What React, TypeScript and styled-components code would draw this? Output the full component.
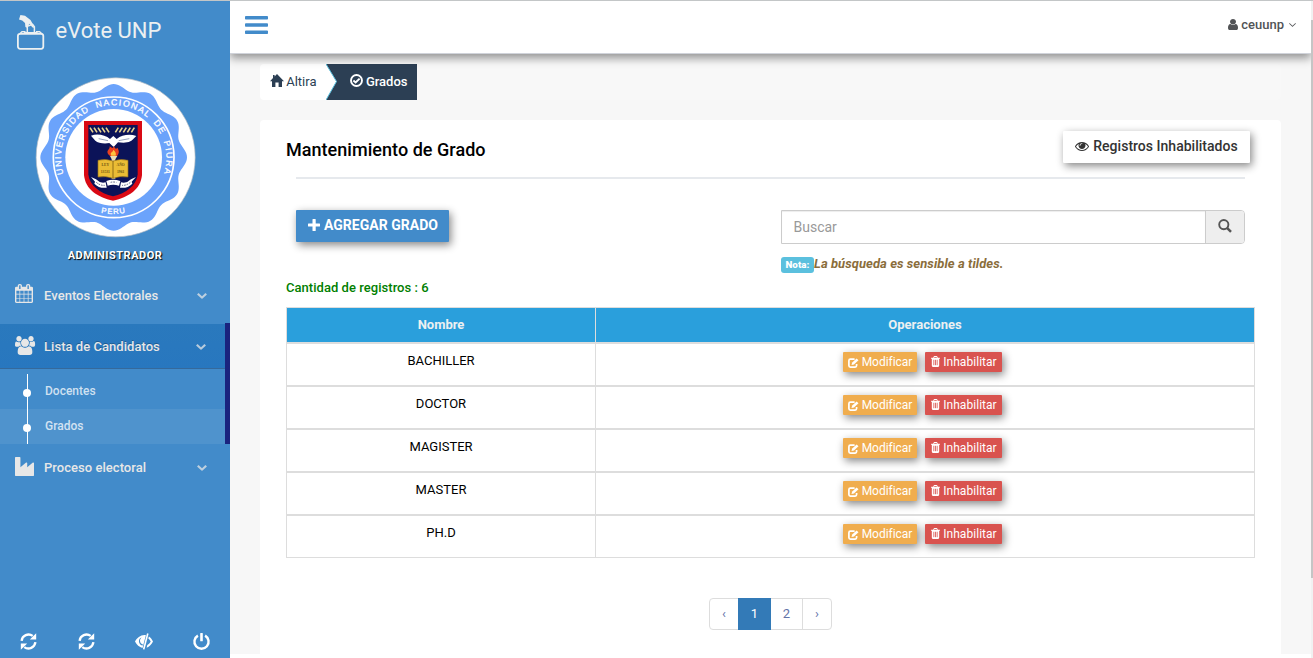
import React from "react";
import styled, { createGlobalStyle, css } from "styled-components";

const GlobalStyle = createGlobalStyle`
  *, *::before, *::after { box-sizing: border-box; }
  html, body { margin: 0; height: 100%; overflow: hidden; }
  body {
    font-family: Roboto, "Liberation Sans", sans-serif;
    font-size: 13px;
    line-height: 18px;
    color: #73879c;
    background: #f7f7f7;
  }
`;

/* ---------- icons ---------- */

type Glyph = { box: string; d: string };

const glyphs = {
  bars: {
    box: "128 192 1536 1408",
    d: "M1664 1344v128q0 26-19 45t-45 19h-1408q-26 0-45-19t-19-45v-128q0-26 19-45t45-19h1408q26 0 45 19t19 45zm0-512v128q0 26-19 45t-45 19h-1408q-26 0-45-19t-19-45v-128q0-26 19-45t45-19h1408q26 0 45 19t19 45zm0-512v128q0 26-19 45t-45 19h-1408q-26 0-45-19t-19-45v-128q0-26 19-45t45-19h1408q26 0 45 19t19 45z",
  },
  trash: {
    box: "192 128 1408 1536",
    d: "M704 1376v-704q0-14-9-23t-23-9h-64q-14 0-23 9t-9 23v704q0 14 9 23t23 9h64q14 0 23-9t9-23zm256 0v-704q0-14-9-23t-23-9h-64q-14 0-23 9t-9 23v704q0 14 9 23t23 9h64q14 0 23-9t9-23zm256 0v-704q0-14-9-23t-23-9h-64q-14 0-23 9t-9 23v704q0 14 9 23t23 9h64q14 0 23-9t9-23zm-544-992h448l-48-117q-7-9-17-11h-317q-10 2-17 11zm928 32v64q0 14-9 23t-23 9h-96v948q0 83-47 143.5t-113 60.5h-832q-66 0-113-58.5t-47-141.5v-952h-96q-14 0-23-9t-9-23v-64q0-14 9-23t23-9h309l70-167q15-37 54-63t79-26h320q40 0 79 26t54 63l70 167h309q14 0 23 9t9 23z",
  },
  eye: {
    box: "0 384 1792 1152",
    d: "M1664 960q-152-236-381-353 61 104 61 225 0 185-131.5 316.5t-316.5 131.5-316.5-131.5-131.5-316.5q0-121 61-225-229 117-381 353 133 205 333.5 326.5t434.5 121.5 434.5-121.5 333.5-326.5zm-720-384q0-20-14-34t-34-14q-125 0-214.5 89.5t-89.5 214.5q0 20 14 34t34 14 34-14 14-34q0-86 61-147t147-61q20 0 34-14t14-34zm848 384q0 34-20 69-140 230-376.5 368.5t-499.5 138.5-499.5-139-376.5-368q-20-35-20-69t20-69q140-229 376.5-368t499.5-139 499.5 139 376.5 368q20 35 20 69z",
  },
  calendar: {
    box: "64 0 1664 1792",
    d: "M192 1664h288v-288h-288v288zm352 0h320v-288h-320v288zm-352-352h288v-320h-288v320zm352 0h320v-320h-320v320zm-352-384h288v-288h-288v288zm736 736h320v-288h-320v288zm-384-736h320v-288h-320v288zm768 736h288v-288h-288v288zm-384-352h320v-320h-320v320zm-352-864v-288q0-13-9.5-22.5t-22.5-9.5h-64q-13 0-22.5 9.5t-9.5 22.5v288q0 13 9.5 22.5t22.5 9.5h64q13 0 22.5-9.5t9.5-22.5zm736 864h288v-320h-288v320zm-384-384h320v-288h-320v288zm384 0h288v-288h-288v288zm32-480v-288q0-13-9.5-22.5t-22.5-9.5h-64q-13 0-22.5 9.5t-9.5 22.5v288q0 13 9.5 22.5t22.5 9.5h64q13 0 22.5-9.5t9.5-22.5zm384-64v1280q0 52-38 90t-90 38h-1408q-52 0-90-38t-38-90v-1280q0-52 38-90t90-38h128v-96q0-66 47-113t113-47h64q66 0 113 47t47 113v96h384v-96q0-66 47-113t113-47h64q66 0 113 47t47 113v96h128q52 0 90 38t38 90z",
  },
  users: {
    box: "64 0 1920 1792",
    d: "M657 896q-162 5-265 128h-134q-82 0-138-40.5t-56-118.5q0-353 124-353 6 0 43.5 21t97.5 42.5 119 21.5q67 0 133-23-5 37-5 66 0 159 93 293zm1071 637q0 120-73 189.5t-194 69.5h-874q-121 0-194-69.5t-73-189.5q0-53 3.5-103.5t14-109 26.5-108.5 43-97.5 62-81 85.5-53.5 111.5-20q10 0 43 21.5t73 48 107 48 135 21.5 135-21.5 107-48 73-48 43-21.5q61 0 111.5 20t85.5 53.5 62 81 43 97.5 26.5 108.5 14 109 3.5 103.5zm-1024-1277q0 106-75 181t-181 75-181-75-75-181 75-181 181-75 181 75 75 181zm704 384q0 159-112.5 271.5t-271.5 112.5-271.5-112.5-112.5-271.5 112.5-271.5 271.5-112.5 271.5 112.5 112.5 271.5zm576 225q0 78-56 118.5t-138 40.5h-134q-103-123-265-128 93-134 93-293 0-29-5-66 66 23 133 23 59 0 119-21.5t97.5-42.5 43.5-21q124 0 124 353zm-128-609q0 106-75 181t-181 75-181-75-75-181 75-181 181-75 181 75 75 181z",
  },
  industry: {
    box: "0 0 1792 1792",
    d: "M448 0q26 0 45 19t19 45v891l536-429q17-14 40-14 26 0 45 19t19 45v379l536-429q17-14 40-14 26 0 45 19t19 45v1152q0 26-19 45t-45 19h-1664q-26 0-45-19t-19-45v-1664q0-26 19-45t45-19h384z",
  },
  user: {
    box: "256 128 1280 1536",
    d: "M1536 1399q0 109-62.5 187t-150.5 78h-854q-88 0-150.5-78t-62.5-187q0-85 8.5-160.5t31.5-152 58.5-131 94-89 134.5-34.5q131 128 313 128t313-128q76 0 134.5 34.5t94 89 58.5 131 31.5 152 8.5 160.5zm-256-887q0 159-112.5 271.5t-271.5 112.5-271.5-112.5-112.5-271.5 112.5-271.5 271.5-112.5 271.5 112.5 112.5 271.5z",
  },
  angleDown: {
    box: "384 640 1024 608",
    d: "M1395 736q0 13-10 23l-466 466q-10 10-23 10t-23-10l-466-466q-10-10-10-23t10-23l50-50q10-10 23-10t23 10l393 393 393-393q10-10 23-10t23 10l50 50q10 10 10 23z",
  },
  chevronDown: {
    box: "64 512 1664 1088",
    d: "M1683 808l-742 741q-19 19-45 19t-45-19l-742-741q-19-19-19-45.5t19-45.5l166-165q19-19 45-19t45 19l531 531 531-531q19-19 45-19t45 19l166 165q19 19 19 45.5t-19 45.5z",
  },
  home: {
    box: "0 0 14 13",
    d: "M7 0L14 7.2H12V13H8.6V8.4H5.4V13H2V7.2H0L3 4.1V1H4.6V2.5Z",
  },
  plus: {
    box: "0 0 12 12",
    d: "M4.5 0.5Q4.5 0 5 0H7.2Q7.7 0 7.7 0.5V4.4H11.5Q12 4.4 12 4.9V7Q12 7.5 11.5 7.5H7.7V11.5Q7.7 12 7.2 12H5Q4.5 12 4.5 11.5V7.5H0.5Q0 7.5 0 7V4.9Q0 4.4 0.5 4.4H4.5Z",
  },
} satisfies Record<string, Glyph>;

type IconProps = { name: keyof typeof glyphs; w: number; h: number };

const Svg = styled.svg`
  display: block;
  flex: none;
  fill: currentColor;
  overflow: visible;
`;

const Icon = ({ name, w, h }: IconProps) => (
  <Svg width={w} height={h} viewBox={glyphs[name].box} preserveAspectRatio="none">
    <path d={glyphs[name].d} />
  </Svg>
);

const EditIcon = () => (
  <Svg width="11" height="10" viewBox="0 0 11 10">
    <path
      d="M6.6 1.2H2.4Q0.9 1.2 0.9 2.7V7.6Q0.9 9.1 2.4 9.1H7.1Q8.6 9.1 8.6 7.6V6"
      fill="none"
      stroke="currentColor"
      strokeWidth="1.7"
    />
    <path d="M3.5 7L4.2 4.6L8.6 0.4L10.5 2.2L6 6.4Z" />
  </Svg>
);

const RefreshIcon = () => (
  <Svg width="17" height="17" viewBox="0 0 17 17">
    <path d="M1.6 7.8A7 7 0 0 1 12.7 2.9" fill="none" stroke="currentColor" strokeWidth="2.3" />
    <path d="M15.4 9.2A7 7 0 0 1 4.3 14.1" fill="none" stroke="currentColor" strokeWidth="2.3" />
    <path d="M16.2 0.2V6.6H9.8Z" />
    <path d="M0.8 16.8V10.4H7.2Z" />
  </Svg>
);

const EyeCloseIcon = () => (
  <Svg width="18" height="17" viewBox="0 0 18 17">
    <path
      fillRule="evenodd"
      d="M10.9 2.2L7.5 15.1C4.4 14.3 1.6 11.8 0 8.6C2 4.6 6.4 1.3 10.9 2.2ZM6.6 4.6C4.7 5.1 3.7 6.9 4 9C4.4 11 5.8 12.3 7.7 12.5L8 11.4C6.4 11.3 5.1 10 5 8.1C4.9 6.6 5.6 5.4 6.6 4.6Z"
    />
    <path d="M12 0.3L13.6 0.7L9.5 16.6L7.9 16.2Z" />
    <path d="M13.9 3.6C15.8 4.8 17.2 6.8 18 8.6C16.6 11.4 14.5 13.7 11.6 14.8L12.3 12C13.9 11.2 15 10 15.7 8.5C15.1 7.2 14.2 6.2 13.3 5.6Z" />
  </Svg>
);

const PowerIcon = () => (
  <Svg width="17" height="17" viewBox="0 0 17 17">
    <path d="M4.9 2.6A7.1 7.1 0 1 0 12.1 2.6" fill="none" stroke="currentColor" strokeWidth="2.4" />
    <rect x="7.2" y="0" width="2.6" height="8.3" rx="0.6" />
  </Svg>
);

const OkCircleIcon = () => (
  <Svg width="13" height="13" viewBox="0 0 13 13">
    <circle cx="6.5" cy="6.5" r="5.5" fill="none" stroke="currentColor" strokeWidth="1.9" />
    <path d="M3.4 6.6L5.6 8.4L9.6 4.6" fill="none" stroke="currentColor" strokeWidth="2" />
  </Svg>
);

const SearchIcon = () => (
  <Svg width="14" height="14" viewBox="0 0 14 14">
    <circle cx="5.8" cy="5.6" r="4.6" fill="none" stroke="currentColor" strokeWidth="1.9" />
    <path d="M9 8.8L13 12.8" stroke="currentColor" strokeWidth="2.5" />
  </Svg>
);

const BallotIcon = () => (
  <Svg width="28" height="36" viewBox="0 0 28 36">
    <path d="M3.4 0L8 0.8L13.5 5L16.5 10.2L17 13L15.2 12.2L12.6 8.8L11.2 10.6L10.6 13L8.4 12L8 8L5.2 5.6L2 4.6Z" />
    <path d="M10.3 18V11.2L15.6 9.4L17.4 11.8V18" fill="none" stroke="currentColor" strokeWidth="1.5" />
    <path d="M8.5 16.8H5L2.2 19.3M19 16.8H22.6L25.4 19.3M7 17.6H20.6" fill="none" stroke="currentColor" strokeWidth="1.4" />
    <rect x="0.9" y="18.9" width="25.4" height="14.9" rx="2.2" fill="none" stroke="currentColor" strokeWidth="1.8" />
  </Svg>
);

/* ---------- university seal ---------- */

const CX = 281;
const CY = 262;
const scallop =
  Array.from({ length: 240 }, (_, i) => {
    const a = (i / 240) * Math.PI * 2;
    const r = 211 + 9 * Math.cos(12 * a);
    return `${i ? "L" : "M"}${(CX + r * Math.sin(a)).toFixed(1)} ${(CY - r * Math.cos(a)).toFixed(1)}`;
  }).join("") + "Z";

const SealSvg = styled.svg`
  display: block;
  margin: 0 0 0 35px;
`;

const SealText = styled.text<{ $size: number }>`
  font-family: "Liberation Sans", sans-serif;
  font-size: ${(p) => p.$size}px;
  fill: #fff;
  stroke: #fff;
  stroke-width: 0.9;
`;

const BookText = styled.text`
  font-family: "Liberation Serif", serif;
  font-size: 11px;
  font-weight: 700;
  fill: #6b5310;
  text-anchor: middle;
`;

const Seal = () => (
  <SealSvg width="161" height="161" viewBox="45 21 483 483">
    <defs>
      <path id="arcTop" d="M130.6 312A158 158 0 1 1 431.4 312" />
      <path id="arcBottom" d="M130 340A170 170 0 0 0 432 340" />
    </defs>
    <circle cx="287" cy="262" r="238.5" fill="#fff" stroke="#b9bfc6" strokeWidth="2" />
    <path d={scallop} fill="#6ba3fb" />
    <circle cx={CX} cy={CY} r="181" fill="none" stroke="#fff" strokeWidth="5" />
    <circle cx={CX} cy={CY} r="145" fill="#fff" />
    <SealText $size={26} wordSpacing="9">
      <textPath href="#arcTop" textLength="592">
        UNIVERSIDAD NACIONAL DE PIURA
      </textPath>
    </SealText>
    <SealText $size={23} letterSpacing="3">
      <textPath href="#arcBottom" startOffset="50%" textAnchor="middle">
        PERU
      </textPath>
    </SealText>
    <path d="M192 153H366V315C362 358 326 382 279 392C232 382 196 358 192 315Z" fill="#d90914" />
    <path d="M205 165H353V313C350 347 318 370 279 379C240 370 208 347 205 313Z" fill="#0b1358" />
    <path
      d="M210 173l9 14M222 173l9 14M234 173l9 14M246 173l9 14M258 173l9 14M286 187l9-14M298 187l9-14M310 187l9-14M322 187l9-14M334 187l9-14"
      stroke="#e9d48e"
      strokeWidth="5"
    />
    <path
      d="M213 197C232 190 256 195 270 207L280 198L290 207C306 195 328 191 349 198C341 206 337 211 331 214C320 220 304 218 294 217L281 231L268 219C252 222 234 219 226 212Z"
      fill="#fff"
    />
    <path d="M236 206L264 212M328 206L296 212" stroke="#98a3bd" strokeWidth="3" />
    <path d="M264 252C258 240 270 240 269 229C277 234 279 238 281 228C286 235 287 240 292 233C299 243 297 251 291 258H270Z" fill="#e8401f" />
    <path d="M272 253C272 245 279 247 280 239C287 246 289 249 287 257H274Z" fill="#ffc23d" />
    <path d="M270 258H292L286 268V326H275V268Z" fill="#eadfb6" />
    <path d="M234 271Q258 265 279 273Q301 265 324 271V321Q300 317 279 325Q257 317 234 321Z" fill="#eabc35" stroke="#987318" strokeWidth="2" />
    <path d="M279 273V324" stroke="#7c5d11" strokeWidth="2.5" />
    <BookText x="256" y="289">LEY</BookText>
    <BookText x="302" y="289">AÑO</BookText>
    <BookText x="256" y="310">13531</BookText>
    <BookText x="302" y="310">1961</BookText>
    <path d="M213 321L228 328Q242 342 257 337L260 353Q238 356 223 341L225 335ZM348 321L333 328Q319 342 303 337L300 353Q322 356 337 341L335 335ZM259 333Q279 326 301 333L297 347Q279 341 263 347Z" fill="#fff" />
    <path d="M229 337Q240 347 254 346M331 337Q320 347 306 346M272 337Q280 335 289 337" fill="none" stroke="#59617f" strokeWidth="3" strokeDasharray="5 3" />
  </SealSvg>
);

/* ---------- shell ---------- */

const Page = styled.div`
  height: 658px;
  display: flex;
  flex-direction: column;
  border-top: 1px solid #c3c6c7;
  background: #f7f7f7;
`;

const Body = styled.div`
  flex: 1;
  min-height: 0;
  display: flex;
`;

const Sidebar = styled.aside`
  width: 230px;
  flex: none;
  display: flex;
  flex-direction: column;
  background: #428bca;
  color: #e7e7e7;
`;

const Brand = styled.div`
  display: flex;
  height: 76px;
  padding: 14px 0 0 17px;
  gap: 10.5px;
  font-size: 22px;
  line-height: 32px;
  color: #ecf0f1;
`;

const Role = styled.div`
  margin-top: 10px;
  text-align: center;
  font-size: 11px;
  line-height: 16px;
  font-weight: 700;
  letter-spacing: 0.5px;
  color: #fff;
  text-shadow: 1px 1px 1px #000;
`;

const Menu = styled.nav`
  margin-top: 8px;
  display: flex;
  flex-direction: column;
  font-weight: 500;
`;

const MenuRow = styled.a<{ $active?: boolean; $height: number; $top?: number; $bottom?: number }>`
  display: flex;
  align-items: center;
  height: ${(p) => p.$height}px;
  padding: ${(p) => p.$top ?? 0}px ${(p) => (p.$active ? 19 : 23)}px ${(p) => p.$bottom ?? 0}px 14px;
  color: #e7e7e7;
  & > svg { opacity: 0.75; }
  ${(p) =>
    p.$active &&
    css`
      background: linear-gradient(#2a79bd, #2877bf);
      border-bottom: 1px solid #35699b;
      text-shadow: rgba(0, 0, 0, 0.25) 0 -1px 0;
    `}
`;

const MenuIcon = styled.span`
  width: 30px;
  padding: 0 0 4px 0.5px;
`;

const MenuLabel = styled.span`
  flex: 1;
  letter-spacing: 0.04px;
`;

const ActiveGroup = styled.div`
  margin-top: -1px;
  padding-top: 1px;
  border-right: 5px solid #1a237e;
`;

const SubMenu = styled.div`
  padding-top: 5px;
`;

const SubRow = styled.a<{ $current?: boolean }>`
  display: flex;
  align-items: flex-start;
  height: 35px;
  padding-left: 23px;
  font-size: 12px;
  line-height: 34px;
  color: rgba(255, 255, 255, 0.75);
  background: ${(p) => (p.$current ? "rgba(255,255,255,.07)" : "transparent")};
`;

const Track = styled.span`
  width: 8px;
  height: 35px;
  margin-right: 14px;
  display: flex;
  align-items: center;
  padding-top: 3px;
  background: linear-gradient(#fff, #fff) 4px 0 / 1px 100% no-repeat;
`;

const Dot = styled.span`
  width: 8px;
  height: 8px;
  border-radius: 50%;
  background: #fff;
`;

const SideFooter = styled.div`
  margin-top: auto;
  display: grid;
  grid-template-columns: repeat(4, 1fr);
  justify-items: center;
  padding-bottom: 8px;
  color: #fff;
`;

const Main = styled.main`
  flex: 1;
  min-width: 0;
  display: flex;
  flex-direction: column;
`;

const TopBar = styled.header`
  flex: none;
  display: flex;
  justify-content: space-between;
  height: 53px;
  padding: 14px 15px 0;
  background: #fff;
  border-bottom: 1px solid #d0d3da;
  box-shadow: 0 4px 9px rgba(0, 0, 0, 0.42);
  clip-path: inset(0 0 -20px 0);
  color: #428bca;
`;

const Account = styled.div`
  display: flex;
  align-items: center;
  height: 20px;
  gap: 3px;
  font-weight: 500;
  color: #515356;
  & > :first-child { margin-top: -2px; }
  & > :last-child { margin: 0 0 1px 2px; }
`;

const Content = styled.div`
  flex: 1;
  min-height: 0;
  display: flex;
  flex-direction: column;
  padding: 10px 30px 0;
`;

const Crumbs = styled.div`
  flex: none;
  display: flex;
  height: 36px;
  margin-bottom: 20px;
  border-radius: 4px;
  background: #f8f8f8;
`;

const Crumb = styled.span<{ $dark?: boolean }>`
  display: flex;
  align-items: center;
  gap: ${(p) => (p.$dark ? 3.2 : 2.2)}px;
  width: ${(p) => (p.$dark ? 91 : 66)}px;
  padding-left: ${(p) => (p.$dark ? 0 : 10)}px;
  color: ${(p) => (p.$dark ? "#fff" : "#2c3f54")};
  background: ${(p) => (p.$dark ? "#2c3f54" : "#fff")};
  border-radius: ${(p) => (p.$dark ? 0 : "4px 0 0 4px")};
  font-weight: ${(p) => (p.$dark ? 500 : 400)};
`;

const CrumbIcon = styled.span`
  padding-bottom: 3px;
`;

const CrumbArrow = styled.svg`
  display: block;
  margin-right: 6.5px;
`;

const Card = styled.section`
  flex: 1;
  min-height: 0;
  display: flex;
  flex-direction: column;
  padding: 10px 26px 0;
  background: #fff;
  border-radius: 4px 4px 0 0;
`;

const CardHead = styled.div`
  display: flex;
  justify-content: space-between;
  height: 48px;
  padding-right: 5px;
`;

const Title = styled.h2`
  margin: 9px 0 0;
  font-size: 18px;
  line-height: 22px;
  font-weight: 500;
  letter-spacing: 0.04px;
  color: #000;
`;

const raised = "2px 3px 9px rgba(0, 0, 0, 0.48)";

const Button = styled.button<{ $tone: "plain" | "primary" }>`
  display: flex;
  align-items: center;
  justify-content: center;
  gap: 4px;
  height: 32px;
  width: ${(p) => (p.$tone === "plain" ? 187 : 153)}px;
  padding: 0 0 2px ${(p) => (p.$tone === "plain" ? 0 : 1)}px;
  border: 0;
  border-radius: 1px;
  font: ${(p) => (p.$tone === "plain" ? 500 : 700)} 14px/20px Roboto, sans-serif;
  letter-spacing: 0.02px;
  color: ${(p) => (p.$tone === "plain" ? "#333" : "#fff")};
  background: ${(p) => (p.$tone === "plain" ? "#fff" : "#428bca")};
  box-shadow: ${raised};
`;

const HeadButton = styled.div`
  padding-top: 1px;
`;

const Rule = styled.hr`
  width: 949px;
  height: 2px;
  margin: -1px 0 31px 10px;
  border: 0;
  background: #e6e9ed;
  flex: none;
`;

const Tools = styled.div`
  display: flex;
  justify-content: space-between;
  height: 69px;
  padding: 0 10px;
`;

const SearchBox = styled.div`
  display: flex;
  width: 464px;
  height: 34px;
  border: 1px solid #ccc;
  border-radius: 0 4px 4px 0;
  overflow: hidden;
`;

const Input = styled.input`
  flex: 1;
  min-width: 0;
  border: 0;
  padding: 0 11.5px;
  font: 400 14px/20px Roboto, sans-serif;
  box-shadow: inset 0 1px 1px rgba(0, 0, 0, 0.075);
  &::placeholder { color: #999; opacity: 1; }
`;

const Addon = styled.span`
  width: 39px;
  padding: 0 1px 2px 0;
  display: flex;
  align-items: center;
  justify-content: center;
  border-left: 1px solid #ccc;
  background: #eee;
  color: #555;
`;

const Note = styled.div`
  display: flex;
  align-items: center;
  margin-top: 10px;
  height: 20px;
  font-weight: 700;
  font-style: italic;
  letter-spacing: 0.06px;
  color: #8a6d3b;
`;

const NoteTag = styled.span`
  width: 33px;
  height: 16px;
  margin-top: 2px;
  border-radius: 3px;
  background: #5bc0de;
  color: #fff;
  font-size: 9.75px;
  font-weight: 900;
  line-height: 16px;
  font-style: normal;
  text-align: center;
`;

const Count = styled.div`
  height: 28px;
  line-height: 18px;
  font-weight: 500;
  letter-spacing: 0.04px;
  color: #008000;
`;

const Table = styled.div`
  flex: none;
  width: 969px;
  border: 1px solid #ddd;
`;

const Row = styled.div<{ $head?: boolean }>`
  display: grid;
  grid-template-columns: 308px 1fr;
  height: ${(p) => (p.$head ? 36 : 43)}px;
  border-bottom: 2px solid #ddd;
  color: ${(p) => (p.$head ? "#ecf0f1" : "#000")};
  background: ${(p) => (p.$head ? "#2a9fdc" : "transparent")};
  font-weight: ${(p) => (p.$head ? 700 : 400)};
  &:last-child { border-bottom: 0; height: 41px; }
`;

const Cell = styled.div<{ $actions?: boolean }>`
  display: flex;
  justify-content: center;
  padding: 8px ${(p) => (p.$actions ? 5 : 0)}px 0 0;
  gap: 8px;
  & + & { border-left: 1px solid #ddd; }
`;

const Action = styled.button<{ $danger?: boolean }>`
  display: flex;
  align-items: center;
  justify-content: center;
  gap: 3px;
  width: ${(p) => (p.$danger ? 77 : 74)}px;
  height: 20px;
  padding: 0 0 0 ${(p) => (p.$danger ? 1 : 0)}px;
  border: 0;
  border-radius: 1px;
  font: 400 12px/18px Roboto, sans-serif;
  letter-spacing: ${(p) => (p.$danger ? 0.04 : -0.04)}px;
  color: #fff;
  background: ${(p) => (p.$danger ? "#d9534f" : "#f0ad4e")};
  box-shadow: ${raised};
  & > svg { margin-top: ${(p) => (p.$danger ? -1 : 1)}px; }
`;

const Pager = styled.div`
  flex: none;
  align-self: center;
  display: flex;
  height: 32px;
  margin-top: 40px;
  border: 1px solid #ddd;
  border-radius: 4px;
`;

const PageItem = styled.a<{ $w: number; $current?: boolean; $divided?: boolean }>`
  width: ${(p) => p.$w}px;
  text-align: center;
  line-height: 30px;
  color: ${(p) => (p.$current ? "#fff" : "#6373a8")};
  border-left: ${(p) => (p.$divided ? "1px solid #ddd" : "0")};
  ${(p) =>
    p.$current &&
    css`
      margin: -1px 0;
      line-height: 32px;
      background: #337ab7;
    `}
`;

const BottomStrip = styled.div`
  flex: none;
  height: 4px;
  background: #fff;
`;

const ScrollTrack = styled.div`
  width: 2px;
  flex: none;
  padding-top: 19px;
  background: #f1f1f1;
`;

const ScrollThumb = styled.div`
  height: 558px;
  background: #c5c5c5;
`;

const grados = ["BACHILLER", "DOCTOR", "MAGISTER", "MASTER", "PH.D"];

export default function App() {
  return (
    <Page>
      <GlobalStyle />
      <Body>
        <Sidebar>
          <Brand>
            <BallotIcon />
            <span>eVote UNP</span>
          </Brand>
          <Seal />
          <Role>ADMINISTRADOR</Role>
          <Menu>
            <MenuRow $height={52} $bottom={5}>
              <MenuIcon><Icon name="calendar" w={18} h={19} /></MenuIcon>
              <MenuLabel>Eventos Electorales</MenuLabel>
              <Icon name="chevronDown" w={10} h={6} />
            </MenuRow>
            <ActiveGroup>
              <MenuRow $active $height={45} $top={2}>
                <MenuIcon><Icon name="users" w={20} h={19} /></MenuIcon>
                <MenuLabel>Lista de Candidatos</MenuLabel>
                <Icon name="chevronDown" w={10} h={6} />
              </MenuRow>
              <SubMenu>
                <SubRow><Track><Dot /></Track>Docentes</SubRow>
                <SubRow $current><Track><Dot /></Track>Grados</SubRow>
              </SubMenu>
            </ActiveGroup>
            <MenuRow $height={46} $top={2}>
              <MenuIcon><Icon name="industry" w={19} h={19} /></MenuIcon>
              <MenuLabel>Proceso electoral</MenuLabel>
              <Icon name="chevronDown" w={10} h={6} />
            </MenuRow>
          </Menu>
          <SideFooter>
            <RefreshIcon />
            <RefreshIcon />
            <EyeCloseIcon />
            <PowerIcon />
          </SideFooter>
        </Sidebar>
        <Main>
          <TopBar>
            <Icon name="bars" w={23} h={20} />
            <Account>
              <Icon name="user" w={10} h={11} />
              ceuunp
              <Icon name="angleDown" w={7} h={4} />
            </Account>
          </TopBar>
          <Content>
            <Crumbs>
              <Crumb>
                <CrumbIcon><Icon name="home" w={14} h={13} /></CrumbIcon>
                Altira
              </Crumb>
              <Crumb $dark>
                <CrumbArrow width="14" height="36" viewBox="0 0 14 36">
                  <path d="M0 0L10.5 17.5L0 36Z" fill="#fff" />
                  <path d="M0 0L10.5 17.5L0 36" fill="none" stroke="#5bc0de" strokeWidth="1" />
                </CrumbArrow>
                <CrumbIcon><OkCircleIcon /></CrumbIcon>
                Grados
              </Crumb>
            </Crumbs>
            <Card>
              <CardHead>
                <Title>Mantenimiento de Grado</Title>
                <HeadButton>
                  <Button $tone="plain">
                    <Icon name="eye" w={14} h={9} />
                    Registros Inhabilitados
                  </Button>
                </HeadButton>
              </CardHead>
              <Rule />
              <Tools>
                <Button $tone="primary">
                  <Icon name="plus" w={12} h={12} />
                  AGREGAR GRADO
                </Button>
                <div>
                  <SearchBox>
                    <Input placeholder="Buscar" />
                    <Addon><SearchIcon /></Addon>
                  </SearchBox>
                  <Note>
                    <NoteTag>Nota:</NoteTag>
                    La búsqueda es sensible a tildes.
                  </Note>
                </div>
              </Tools>
              <Count>Cantidad de registros : 6</Count>
              <Table>
                <Row $head>
                  <Cell>Nombre</Cell>
                  <Cell>Operaciones</Cell>
                </Row>
                {grados.map((g) => (
                  <Row key={g}>
                    <Cell>{g}</Cell>
                    <Cell $actions>
                      <Action>
                        <EditIcon />
                        Modificar
                      </Action>
                      <Action $danger>
                        <Icon name="trash" w={9} h={11} />
                        Inhabilitar
                      </Action>
                    </Cell>
                  </Row>
                ))}
              </Table>
              <Pager>
                <PageItem $w={28}>‹</PageItem>
                <PageItem $w={33} $current>1</PageItem>
                <PageItem $w={31}>2</PageItem>
                <PageItem $w={29} $divided>›</PageItem>
              </Pager>
            </Card>
          </Content>
          <BottomStrip />
        </Main>
        <ScrollTrack>
          <ScrollThumb />
        </ScrollTrack>
      </Body>
    </Page>
  );
}
